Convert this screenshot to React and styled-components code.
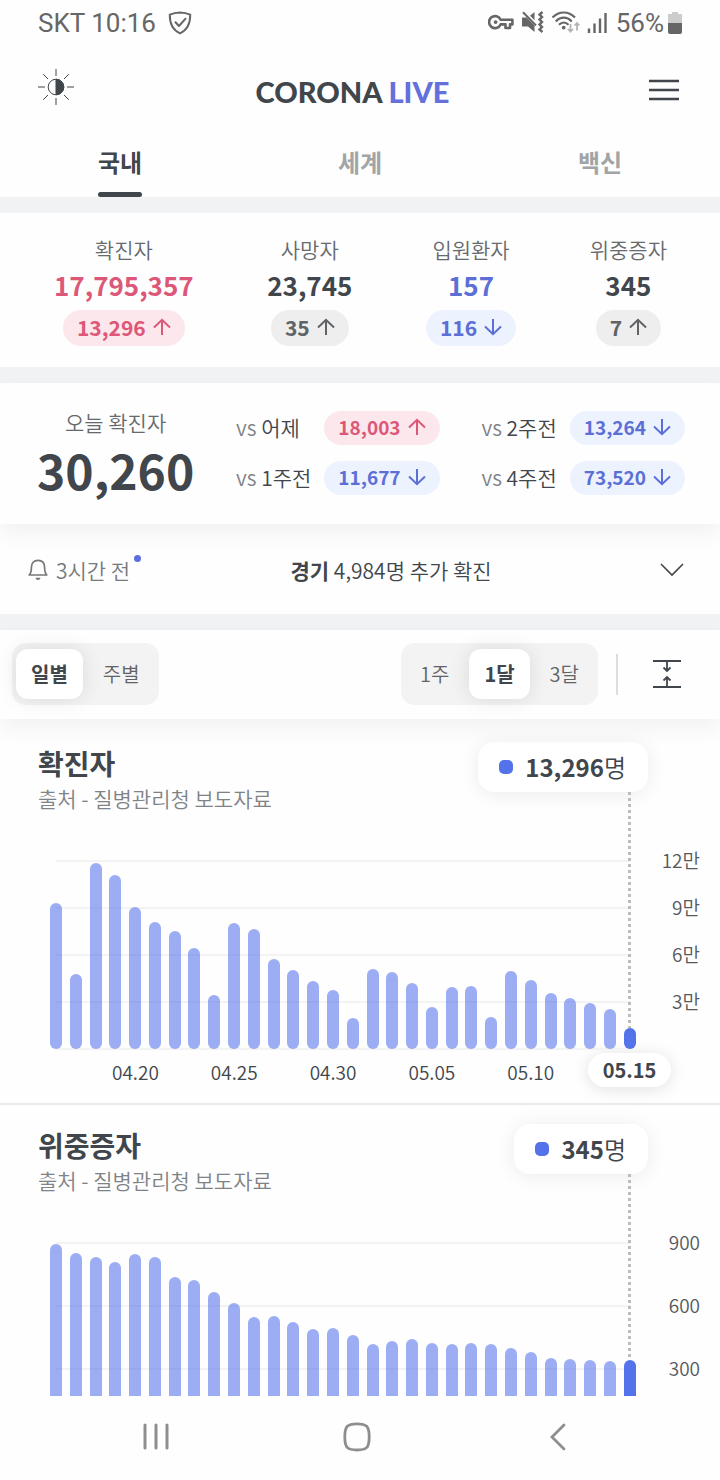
import React from "react";
import { useState } from "react";
import styled, { createGlobalStyle } from "styled-components";

const summary = [
  { label: "확진자", total: "17,795,357", change: "13,296", up: true, totalTone: "red", tone: "red" },
  { label: "사망자", total: "23,745", change: "35", up: true, totalTone: "dark", tone: "gray" },
  { label: "입원환자", total: "157", change: "116", up: false, totalTone: "blue", tone: "blue" },
  { label: "위중증자", total: "345", change: "7", up: true, totalTone: "dark", tone: "gray" },
];

const comparisons = [
  [
    { label: "어제", value: "18,003", up: true },
    { label: "1주전", value: "11,677", up: false },
  ],
  [
    { label: "2주전", value: "13,264", up: false },
    { label: "4주전", value: "73,520", up: false },
  ],
];

const dates = ["04.20", "04.25", "04.30", "05.05", "05.10", "05.15"];

const confirmed = [
  92970, 47743, 118504, 111319, 90867, 81058, 75449, 64725, 34370, 80361,
  76787, 57464, 50568, 43286, 37771, 20084, 51131, 49064, 42296, 26714,
  39600, 40064, 20601, 49933, 43925, 35906, 32451, 29581, 25434, 13296,
];

const severe = [
  893, 850, 833, 808, 846, 834, 738, 726, 668, 613, 546, 552, 526, 490, 493,
  461, 417, 432, 441, 423, 419, 423, 421, 398, 383, 354, 347, 341, 338, 345,
];

const tones = {
  red: { color: "#dd5878", background: "#fce8ec" },
  blue: { color: "#5b6fd6", background: "#edf2ff" },
  gray: { color: "#5f6366", background: "#eeeeee" },
  dark: { color: "#40464b", background: "#ffffff" },
};

const Arrow = ({ up }) => (
  <svg width="18" height="18" viewBox="0 0 18 18" fill="none" stroke="currentColor" strokeWidth="2">
    {up ? <path d="M9 17V2M1 9.5L9 1.8L17 9.5" /> : <path d="M9 1V16M1 8.5L9 16.2L17 8.5" />}
  </svg>
);

const Change = ({ tone, up, small, children }) => (
  <Pill $tone={tone} $small={small}>
    {children}
    <Arrow up={up} />
  </Pill>
);

const StatusIcons = () => (
  <svg width="120" height="24" viewBox="0 0 120 24" fill="none" stroke="#666" aria-hidden="true">
    <g strokeWidth="2.6">
      <path d="M12.6 8.8A6 6 0 1 0 12.6 13.4H17.5V17H22V13.4H24.4V8.800Z" strokeLinejoin="round" />
      <circle cx="7.6" cy="11.1" r="1.9" fill="#666" stroke="none" />
    </g>
    <g>
      <path d="M34 6.500H38.500L46.500 14.500V21L40 15.500H34Z" fill="#666" stroke="none" />
      <path d="M42 4.800L46.500 1V9.300Z" fill="#666" stroke="none" />
      <path d="M35 1.200L48 14.500" strokeWidth="2" />
      <path d="M54.500 1L51.500 3.500L54 6L51.500 8.500L54 11L51.500 13.500L54 16L51.500 18.500L54.500 21" strokeWidth="2.4" />
    </g>
    <g strokeWidth="2.2">
      <path d="M64.5 6.6C71 -0.2 80.5 -0.2 87 6.6" />
      <path d="M67.8 10.4C72.5 5.4 79 5.4 83.7 10.4" />
      <path d="M71 13.8C74 10.8 77.5 10.8 80.5 13.8" />
      <circle cx="75.7" cy="16.6" r="1.9" fill="#666" stroke="none" />
      <path d="M82.5 13V20.5M80 18L82.5 20.7L85 18M89 19.5V12M86.6 14.5L89 12L91.4 14.5" stroke="#b5b5b5" strokeWidth="1.8" />
    </g>
    <path d="M101 17.5V22M106.5 12.5V22M112 7.5V22M117.5 2V22" strokeWidth="2.4" />
  </svg>
);

const Shield = () => (
  <svg width="24" height="24" viewBox="0 0 24 24" fill="none" stroke="#666" strokeWidth="2" strokeLinejoin="round" aria-hidden="true">
    <path d="M12 1.4C8 1.5 5 2.2 1.8 3.6C1.6 13 4.5 19 12 22.4C19.5 19 22.4 13 22.2 3.6C19 2.2 16 1.5 12 1.4Z" />
    <path d="M7 10.8L11 15L18 7.2" />
  </svg>
);

const Battery = () => (
  <svg width="14" height="22" viewBox="0 0 14 22" aria-hidden="true">
    <path d="M4 0H10V2H14V11H0V2H4Z" fill="#cccccc" />
    <path d="M0 11H14V20Q14 22 12 22H2Q0 22 0 20Z" fill="#666" />
  </svg>
);

const Sun = () => (
  <svg width="36" height="36" viewBox="0 0 36 36" fill="none" stroke="#40464b">
    <circle cx="18" cy="18" r="7.8" />
    <path d="M18 10.2A7.8 7.8 0 0 1 18 25.8Z" fill="#40464b" />
    <path d="M18 0V7M18 29V36M0 18H7M29 18H36M5.2 5.2L10 10M26 26L30.8 30.8M30.8 5.2L26 10M10 26L5.2 30.8" />
  </svg>
);

const Bell = () => (
  <svg width="20" height="22" viewBox="0 0 20 22" fill="none" stroke="#777" strokeWidth="1.7" strokeLinejoin="round">
    <path d="M1.2 16C2.8 14.4 3.4 12.5 3.4 8.5C3.4 4 5.7 1.3 10 1.3C14.3 1.3 16.6 4 16.6 8.5C16.6 12.5 17.2 14.4 18.8 16Z" />
    <path d="M7.4 18.8H12.6Q12 21 10 21Q8 21 7.4 18.8Z" fill="#777" stroke="none" />
  </svg>
);

const Chart = ({ title, value, data, ticks, step, rowHeight, days, description }) => {
  const heightOf = (n) => Math.round((n / step) * rowHeight);
  const last = data[data.length - 1];
  return (
    <ChartSection>
      <ChartHeader>
        <div>
          <ChartTitle>{title}</ChartTitle>
          <Source>출처 - 질병관리청 보도자료</Source>
        </div>
        <Tooltip>
          <Marker />
          <span>
            <b>{value}</b>명
          </span>
        </Tooltip>
      </ChartHeader>
      <ChartBody>
        <Plot>
          <GridLines>
            {ticks.map((t) => (
              <GridRow key={t} $height={rowHeight} />
            ))}
          </GridLines>
          <Bars role="img" aria-label={description}>
            {data.map((n, i) => (
              <Bar key={i} $active={i === data.length - 1} style={{ height: heightOf(n) }} />
            ))}
          </Bars>
          <Guide style={{ bottom: heightOf(last) }} />
        </Plot>
        <YAxis $height={rowHeight}>
          {ticks.map((t) => (
            <YTick key={t} $height={rowHeight}>
              {t}
            </YTick>
          ))}
        </YAxis>
      </ChartBody>
      {days && (
        <XAxis>
          {days.map((d, i) =>
            i === days.length - 1 ? (
              <XTick key={d}>
                <DateBadge>{d}</DateBadge>
              </XTick>
            ) : (
              <XTick key={d} $plain>
                {d}
              </XTick>
            )
          )}
        </XAxis>
      )}
    </ChartSection>
  );
};

const App = () => {
  const [tab, setTab] = useState("국내");
  const [unit, setUnit] = useState("일별");
  const [range, setRange] = useState("1달");

  return (
    <Screen>
      <GlobalStyle />
      <StatusBar>
        <StatusGroup $gap="12px">
          SKT 10:16
          <Shield />
        </StatusGroup>
        <StatusGroup $gap="8px">
          <StatusIcons />
          <StatusGroup $gap="4px">
            56%
            <Battery />
          </StatusGroup>
        </StatusGroup>
      </StatusBar>

      <Header>
        <IconButton aria-label="테마">
          <Sun />
        </IconButton>
        <Logo>
          CORONA <span>LIVE</span>
        </Logo>
        <IconButton aria-label="메뉴">
          <svg width="30" height="28" viewBox="0 0 30 28" stroke="#40464b" strokeWidth="2.6">
            <path d="M0 8H30M0 17H30M0 26H30" />
          </svg>
        </IconButton>
      </Header>

      <Tabs>
        {["국내", "세계", "백신"].map((t) => (
          <Tab key={t} $active={t === tab} onClick={() => setTab(t)}>
            <span>{t}</span>
          </Tab>
        ))}
      </Tabs>
      <Band />

      <Summary>
        {summary.map((s) => (
          <SummaryItem key={s.label}>
            <Label>{s.label}</Label>
            <Total $tone={s.totalTone}>{s.total}</Total>
            <Change tone={s.tone} up={s.up}>
              {s.change}
            </Change>
          </SummaryItem>
        ))}
      </Summary>
      <Band />

      <Today>
        <TodayCount>
          <Label>오늘 확진자</Label>
          <BigNumber>30,260</BigNumber>
        </TodayCount>
        {comparisons.map((group, i) => (
          <Versus key={i}>
            {group.map((c) => (
              <React.Fragment key={c.label}>
                <VersusLabel>
                  <span>vs</span> {c.label}
                </VersusLabel>
                <Change small tone={c.up ? "red" : "blue"} up={c.up}>
                  {c.value}
                </Change>
              </React.Fragment>
            ))}
          </Versus>
        ))}
      </Today>

      <Notice>
        <NoticeTime>
          <Bell />
          3시간 전
          <Dot />
        </NoticeTime>
        <div>
          <b>경기</b> 4,984명 추가 확진
        </div>
        <IconButton aria-label="더보기">
          <svg width="40" height="24" viewBox="0 0 40 24" fill="none" stroke="#40464b" strokeWidth="1.6">
            <path d="M9 6L20 17L31 6" />
          </svg>
        </IconButton>
      </Notice>
      <Band />

      <Controls>
        <Segment>
          {["일별", "주별"].map((o) => (
            <Option key={o} $active={o === unit} onClick={() => setUnit(o)}>
              {o}
            </Option>
          ))}
        </Segment>
        <ControlsRight>
          <Segment>
            {["1주", "1달", "3달"].map((o) => (
              <Option key={o} $active={o === range} onClick={() => setRange(o)}>
                {o}
              </Option>
            ))}
          </Segment>
          <Divider />
          <IconButton aria-label="간격 조절">
            <svg width="28" height="30" viewBox="0 0 28 30" fill="none" stroke="#40464b" strokeWidth="1.8">
              <path d="M0 2H28M0 28H28M14 2V11M10.5 8.5L14 12L17.5 8.5M14 28V19M10.5 21.5L14 18L17.5 21.5" />
            </svg>
          </IconButton>
        </ControlsRight>
      </Controls>

      <Charts>
        <Chart
          title="확진자"
          value="13,296"
          data={confirmed}
          ticks={["12만", "9만", "6만", "3만"]}
          step={30000}
          rowHeight={47}
          days={dates}
          description="일별 확진자"
        />
        <Chart
          title="위중증자"
          value="345"
          data={severe}
          ticks={["900", "600", "300"]}
          step={300}
          rowHeight={63}
          description="일별 위중증자"
        />
      </Charts>

      <NavBar>
        <NavButton aria-label="최근 앱">
          <svg width="26" height="28" viewBox="0 0 26 28" stroke="#8e8e8e" strokeWidth="3" strokeLinecap="round">
            <path d="M2 2V25M13 2V25M24 2V25" />
          </svg>
        </NavButton>
        <NavButton aria-label="홈">
          <svg width="28" height="30" viewBox="0 0 28 30" fill="none" stroke="#8e8e8e" strokeWidth="2.8">
            <path d="M14 1.8C23.5 1.8 26.2 4 26.2 15C26.2 26 23.5 28 14 28C4.5 28 1.8 26 1.8 15C1.8 4 4.5 1.8 14 1.8Z" />
          </svg>
        </NavButton>
        <NavButton aria-label="뒤로">
          <svg width="16" height="28" viewBox="0 0 16 28" fill="none" stroke="#8e8e8e" strokeWidth="2.8" strokeLinecap="round">
            <path d="M14 2L2 14L14 26" />
          </svg>
        </NavButton>
      </NavBar>
    </Screen>
  );
};

export default App;

const GlobalStyle = createGlobalStyle`
  * {
    box-sizing: border-box;
  }
  body {
    margin: 0;
    background: #fefefe;
    color: #40464b;
    font-family: "Noto Sans CJK KR", sans-serif;
    font-weight: 350;
  }
  b {
    font-weight: 700;
  }
  button {
    font-family: inherit;
    color: inherit;
    background: none;
    border: none;
    padding: 0;
    cursor: pointer;
  }
  svg {
    display: block;
    flex-shrink: 0;
  }
`;

const Screen = styled.div`
  display: flex;
  flex-direction: column;
  height: 100vh;
`;

const StatusBar = styled.div`
  display: flex;
  align-items: center;
  justify-content: space-between;
  padding: 8px 38px;
  font-family: Roboto, sans-serif;
  font-size: 26px;
  line-height: 30px;
  font-weight: 400;
  color: #666;
`;

const StatusGroup = styled.div`
  display: flex;
  align-items: center;
  gap: ${(p) => p.$gap};
`;

const Header = styled.header`
  display: grid;
  grid-template-columns: 1fr auto 1fr;
  align-items: center;
  padding: 19px 41px 10px 38px;

  > :last-child {
    justify-self: end;
  }
`;

const IconButton = styled.button`
  display: flex;
  align-items: center;
  justify-content: center;
  width: fit-content;
`;

const Logo = styled.h1`
  margin: 0;
  padding: 10px 12px 0 0;
  font-family: Lato, sans-serif;
  font-size: 29px;
  line-height: 34px;
  font-weight: 900;

  span {
    color: #6470dc;
  }
`;

const Tabs = styled.nav`
  display: flex;
`;

const Tab = styled.button`
  flex: 1;
  display: flex;
  justify-content: center;
  font-size: 24px;
  line-height: 32px;
  font-weight: 700;
  color: ${(p) => (p.$active ? "#40464b" : "#a2a4a5")};

  span {
    padding-top: 27px;
  }
  span::after {
    content: "";
    display: block;
    height: 5px;
    margin-top: 14px;
    border-radius: 3px;
    background: ${(p) => (p.$active ? "#40464b" : "transparent")};
  }
`;

const Band = styled.div`
  flex-shrink: 0;
  height: 16px;
  background: #f1f2f4;
`;

const Summary = styled.section`
  display: flex;
  justify-content: space-between;
  padding: 20px 53px 21px 54px;
`;

const SummaryItem = styled.div`
  display: flex;
  flex-direction: column;
  align-items: center;
`;

const Label = styled.div`
  font-size: 21px;
  line-height: 32px;
  color: #666a6d;
`;

const Total = styled.div`
  margin-bottom: 5px;
  font-size: 26px;
  line-height: 40px;
  font-weight: 700;
  color: ${(p) => tones[p.$tone].color};
`;

const Pill = styled.div`
  display: flex;
  align-items: center;
  gap: 7px;
  padding: 0 14px 2px;
  border-radius: 18px;
  font-size: ${(p) => (p.$small ? "19px" : "21px")};
  line-height: ${(p) => (p.$small ? "32px" : "34px")};
  font-weight: 700;
  color: ${(p) => tones[p.$tone].color};
  background: ${(p) => tones[p.$tone].background};
`;

const Today = styled.section`
  position: relative;
  display: flex;
  align-items: center;
  justify-content: space-between;
  padding: 23px 35px 24px 37px;
  background: #fefefe;
  box-shadow: 0 10px 20px rgba(0, 0, 0, 0.05);
`;

const TodayCount = styled.div`
  display: flex;
  flex-direction: column;
  align-items: center;
`;

const BigNumber = styled.div`
  font-size: 48px;
  line-height: 62px;
  font-weight: 700;
`;

const Versus = styled.div`
  display: grid;
  grid-template-columns: auto auto;
  align-items: center;
  gap: 16px 13px;
`;

const VersusLabel = styled.div`
  padding-bottom: 2px;
  font-size: 21px;
  line-height: 32px;
  white-space: nowrap;

  span {
    color: #808386;
  }
`;

const Notice = styled.section`
  display: flex;
  align-items: center;
  justify-content: space-between;
  padding: 31px 28px 29px;
  font-size: 21px;
  line-height: 30px;
`;

const NoticeTime = styled.div`
  position: relative;
  display: flex;
  align-items: center;
  gap: 8px;
  color: #77797b;
`;

const Dot = styled.span`
  position: absolute;
  top: 0;
  right: -11px;
  width: 7px;
  height: 7px;
  border-radius: 50%;
  background: #5b6fe0;
`;

const Controls = styled.section`
  position: relative;
  display: flex;
  justify-content: space-between;
  padding: 13px 39px 14px 12px;
  background: #fefefe;
  box-shadow: 0 10px 20px rgba(0, 0, 0, 0.05);
`;

const ControlsRight = styled.div`
  display: flex;
  align-items: center;
`;

const Segment = styled.div`
  display: flex;
  gap: 5px;
  padding: 6px 4px;
  border-radius: 14px;
  background: #f3f3f3;
`;

const Option = styled.button`
  padding: 0 15px;
  border-radius: 12px;
  font-size: 20px;
  line-height: 50px;
  font-weight: ${(p) => (p.$active ? 700 : 350)};
  color: ${(p) => (p.$active ? "#40464b" : "#5f6366")};
  background: ${(p) => (p.$active ? "#ffffff" : "transparent")};
  box-shadow: ${(p) => (p.$active ? "0 0 20px rgba(0, 0, 0, 0.1)" : "none")};
`;

const Divider = styled.div`
  width: 2px;
  height: 41px;
  margin: 0 35px 0 18px;
  background: #dcdddf;
`;

const Charts = styled.main`
  flex: 1;
  min-height: 0;
  padding-top: 4px;
  overflow: hidden;
`;

const ChartSection = styled.section`
  border-bottom: 2px solid #e9eaeb;
`;

const ChartHeader = styled.div`
  display: flex;
  align-items: flex-start;
  justify-content: space-between;
  padding: 19px 72px 0 38px;
`;

const ChartTitle = styled.h2`
  margin: 0;
  font-size: 28px;
  line-height: 42px;
  font-weight: 700;
`;

const Source = styled.div`
  font-size: 21px;
  line-height: 28px;
  color: #808386;
`;

const Tooltip = styled.div`
  display: flex;
  align-items: center;
  gap: 12px;
  padding: 0 22px 0 21px;
  border-radius: 16px;
  font-size: 24px;
  line-height: 50px;
  background: #ffffff;
  box-shadow: 0 2px 20px rgba(0, 0, 0, 0.08);
`;

const Marker = styled.span`
  width: 14px;
  height: 14px;
  border-radius: 5px;
  background: #5472ea;
`;

const ChartBody = styled.div`
  display: flex;
  padding: 48px 20px 0 50px;
`;

const Plot = styled.div`
  position: relative;
  flex: 1;
  display: grid;
`;

const GridLines = styled.div`
  grid-area: 1 / 1;
  margin: 0 6px -1px;
  border-bottom: 2px solid #f3f3f3;
`;

const GridRow = styled.div`
  height: ${(p) => p.$height}px;
  border-top: 2px solid #f3f3f3;
`;

const Bars = styled.div`
  grid-area: 1 / 1;
  display: flex;
  align-items: flex-end;
  justify-content: space-between;
`;

const Bar = styled.div`
  width: 12px;
  border-radius: 6px;
  background: ${(p) => (p.$active ? "#5472ea" : "rgba(84, 114, 234, 0.58)")};
`;

const Guide = styled.div`
  position: absolute;
  top: -68px;
  right: 5px;
  width: 3px;
  background: repeating-linear-gradient(#bcbcbc 0 3px, transparent 3px 6px);
`;

const YAxis = styled.div`
  width: 64px;
  margin-top: ${(p) => -Math.ceil(p.$height / 2)}px;
  text-align: right;
`;

const YTick = styled.div`
  font-size: 19px;
  line-height: ${(p) => p.$height}px;
  color: #55595c;
`;

const XAxis = styled.div`
  display: flex;
  padding: 4px 41px 16px 86px;
  font-size: 19px;
`;

const XTick = styled.div`
  flex: 1;
  display: flex;
  justify-content: center;
  line-height: ${(p) => (p.$plain ? "38px" : "34px")};
  height: 34px;
`;

const DateBadge = styled.div`
  padding: 0 15px;
  border-radius: 17px;
  font-size: 20px;
  font-weight: 700;
  background: #ffffff;
  box-shadow: 0 2px 16px rgba(0, 0, 0, 0.12);
`;

const NavBar = styled.footer`
  display: flex;
  align-items: center;
  padding: 26px 61px 28px 55px;
`;

const NavButton = styled.button`
  flex: 1;
  display: flex;
  justify-content: center;
`;
